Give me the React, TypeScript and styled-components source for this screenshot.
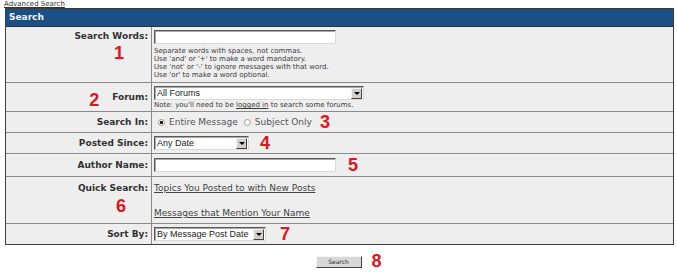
import styled, { createGlobalStyle } from "styled-components";

const GlobalStyle = createGlobalStyle`
  body {
    margin: 0;
    background: #fff;
    font-family: "DejaVu Sans", Verdana, sans-serif;
    color: #333;
  }
`;

export default function App() {
  return (
    <Page>
      <GlobalStyle />
      <TopLink href="#">Advanced Search</TopLink>
      <Panel>
        <PanelHeader>Search</PanelHeader>

        <Row>
          <LabelCell>
            <Label>Search Words:</Label>
            <Marker $offset={24} $top={5}>1</Marker>
          </LabelCell>
          <ValueCell>
            <TextInput $width={182} />
            <Help $gap={3}>
              Separate words with spaces, not commas.
              <br />
              Use 'and' or '+' to make a word mandatory.
              <br />
              Use 'not' or '-' to ignore messages with that word.
              <br />
              Use 'or' to make a word optional.
            </Help>
          </ValueCell>
        </Row>

        <Row>
          <LabelCell $inline>
            <Marker $offset={13} $top={6}>2</Marker>
            <Label>Forum:</Label>
          </LabelCell>
          <ValueCell $tight>
            <Select $width={210}>All Forums</Select>
            <Help $gap={1}>
              Note: you'll need to be <HelpLink href="#">logged in</HelpLink> to
              search some forums.
            </Help>
          </ValueCell>
        </Row>

        <Row>
          <LabelCell $inline>
            <Label>Search In:</Label>
          </LabelCell>
          <ValueCell $inline>
            <Radio $checked />
            <Choice>Entire Message</Choice>
            <Radio />
            <Choice>Subject Only</Choice>
            <Marker $left={6}>3</Marker>
          </ValueCell>
        </Row>

        <Row>
          <LabelCell $inline>
            <Label>Posted Since:</Label>
          </LabelCell>
          <ValueCell $inline>
            <Select $width={95}>Any Date</Select>
            <Marker $left={11}>4</Marker>
          </ValueCell>
        </Row>

        <Row>
          <LabelCell $inline>
            <Label>Author Name:</Label>
          </LabelCell>
          <ValueCell $inline $tall>
            <TextInput $width={182} />
            <Marker $left={12}>5</Marker>
          </ValueCell>
        </Row>

        <Row>
          <LabelCell $pad={6}>
            <Label>Quick Search:</Label>
            <Marker $offset={22} $top={6}>6</Marker>
          </LabelCell>
          <ValueCell>
            <LinkList>
              <QuickLink href="#">Topics You Posted to with New Posts</QuickLink>
              <QuickLink href="#">Messages that Mention Your Name</QuickLink>
            </LinkList>
          </ValueCell>
        </Row>

        <Row $last>
          <LabelCell $inline>
            <Label>Sort By:</Label>
          </LabelCell>
          <ValueCell $inline>
            <Select $width={112}>By Message Post Date</Select>
            <Marker $left={14}>7</Marker>
          </ValueCell>
        </Row>
      </Panel>

      <Footer>
        <span />
        <SubmitButton>Search</SubmitButton>
        <FooterSide>
          <Marker $left={10}>8</Marker>
        </FooterSide>
      </Footer>
    </Page>
  );
}

function Select({ $width, children }: { $width: number; children: string }) {
  return (
    <SelectBox $width={$width}>
      <SelectText>{children}</SelectText>
      <SelectArrow />
    </SelectBox>
  );
}

const Page = styled.div`
  width: 677px;
  height: 273px;
  overflow: hidden;
`;

const TopLink = styled.a`
  display: block;
  height: 8px;
  padding-left: 4px;
  font-size: 7px;
  line-height: 8px;
  color: #333;
`;

const Panel = styled.div`
  margin-left: 5px;
  width: 667px;
  border: 1px solid #3c3c3c;
  background: #eeeeee;
`;

const PanelHeader = styled.div`
  height: 17px;
  padding-left: 3px;
  background: #1c4f84;
  border-bottom: 1px solid #2a3440;
  color: #f4f4f4;
  font-size: 9px;
  font-weight: bold;
  line-height: 16px;
`;

const Row = styled.div<{ $last?: boolean }>`
  display: grid;
  grid-template-columns: 146px 1fr;
  border-bottom: ${(p) => (p.$last ? "none" : "1px solid #8a8a8a")};
`;

const LabelCell = styled.div<{ $inline?: boolean; $pad?: number }>`
  display: flex;
  flex-direction: ${(p) => (p.$inline ? "row" : "column")};
  align-items: ${(p) => (p.$inline ? "center" : "flex-end")};
  justify-content: ${(p) => (p.$inline ? "flex-end" : "flex-start")};
  padding: ${(p) => p.$pad ?? 4}px 3px 3px 4px;
  border-right: 1px solid #8a8a8a;
`;

const Label = styled.span`
  font-size: 9px;
  font-weight: bold;
  line-height: 11px;
  color: #333;
  white-space: nowrap;
`;

const Marker = styled.span<{ $offset?: number; $left?: number; $top?: number }>`
  font-family: "Liberation Sans", Arial, sans-serif;
  font-size: 18px;
  font-weight: bold;
  line-height: 13px;
  color: #e3141b;
  margin-right: ${(p) => p.$offset ?? 0}px;
  margin-left: ${(p) => p.$left ?? 0}px;
  margin-top: ${(p) => p.$top ?? 0}px;
`;

const ValueCell = styled.div<{ $inline?: boolean; $tight?: boolean; $tall?: boolean }>`
  display: flex;
  flex-direction: ${(p) => (p.$inline ? "row" : "column")};
  align-items: ${(p) => (p.$inline ? "center" : "flex-start")};
  padding: ${(p) => (p.$tall ? "4px 3px 4px 2px" : p.$tight ? "3px 3px 2px 2px" : "3px 3px 3px 2px")};
  color: #444;
`;

const TextInput = styled.input<{ $width: number }>`
  box-sizing: border-box;
  width: ${(p) => p.$width}px;
  height: 14px;
  margin: 0;
  padding: 0 2px;
  background: #fff;
  border: 1px solid;
  border-color: #5a5a5a #d8d8d8 #d8d8d8 #5a5a5a;
  box-shadow: inset 1px 1px 0 #a8a8a8;
  outline: none;
`;

const Help = styled.div<{ $gap: number }>`
  margin-top: ${(p) => p.$gap}px;
  font-size: 7px;
  line-height: 8px;
  color: #3a3a3a;
  white-space: nowrap;
`;

const HelpLink = styled.a`
  color: #3a3a3a;
`;

const SelectBox = styled.div<{ $width: number }>`
  box-sizing: border-box;
  display: flex;
  align-items: center;
  width: ${(p) => p.$width}px;
  height: 14px;
  background: #fff;
  border: 1px solid;
  border-color: #5a5a5a #d8d8d8 #d8d8d8 #5a5a5a;
  box-shadow: inset 1px 1px 0 #a8a8a8;
`;

const SelectText = styled.span`
  flex: 1;
  padding-left: 2px;
  font-family: "Liberation Sans", Arial, sans-serif;
  font-size: 9px;
  line-height: 12px;
  color: #222;
  white-space: nowrap;
  overflow: hidden;
`;

const SelectArrow = styled.span`
  position: relative;
  box-sizing: border-box;
  flex: none;
  width: 11px;
  height: 11px;
  margin-right: 1px;
  background: #d4d0c8;
  border: 1px solid;
  border-color: #f4f4f4 #404040 #404040 #f4f4f4;

  &::after {
    content: "";
    position: absolute;
    left: 2px;
    top: 3px;
    border-left: 3px solid transparent;
    border-right: 3px solid transparent;
    border-top: 3px solid #000;
  }
`;

const Radio = styled.span<{ $checked?: boolean }>`
  box-sizing: border-box;
  width: 7px;
  height: 7px;
  margin: 0 4px 0 4px;
  border-radius: 50%;
  border: 1px solid #9a9a9a;
  background: ${(p) =>
    p.$checked ? "radial-gradient(circle, #222 0 1.5px, #fff 2px)" : "#fff"};
`;

const Choice = styled.span`
  font-size: 9px;
  line-height: 14px;
  color: #555;
  margin-right: 2px;
`;

const LinkList = styled.div`
  display: flex;
  flex-direction: column;
  gap: 13px;
  padding: 2px 0 1px;
`;

const QuickLink = styled.a`
  font-size: 9px;
  line-height: 12px;
  color: #444;
`;

const Footer = styled.div`
  display: grid;
  grid-template-columns: 1fr auto 1fr;
  align-items: center;
  margin-top: 10px;
`;

const FooterSide = styled.div`
  display: flex;
  align-items: center;
`;

const SubmitButton = styled.button`
  box-sizing: border-box;
  width: 46px;
  height: 12px;
  padding: 0;
  font-family: "DejaVu Sans", Verdana, sans-serif;
  font-size: 6px;
  line-height: 8px;
  color: #222;
  background: #d8d8d8;
  border: 1px solid;
  border-color: #f4f4f4 #404040 #404040 #f4f4f4;
`;
